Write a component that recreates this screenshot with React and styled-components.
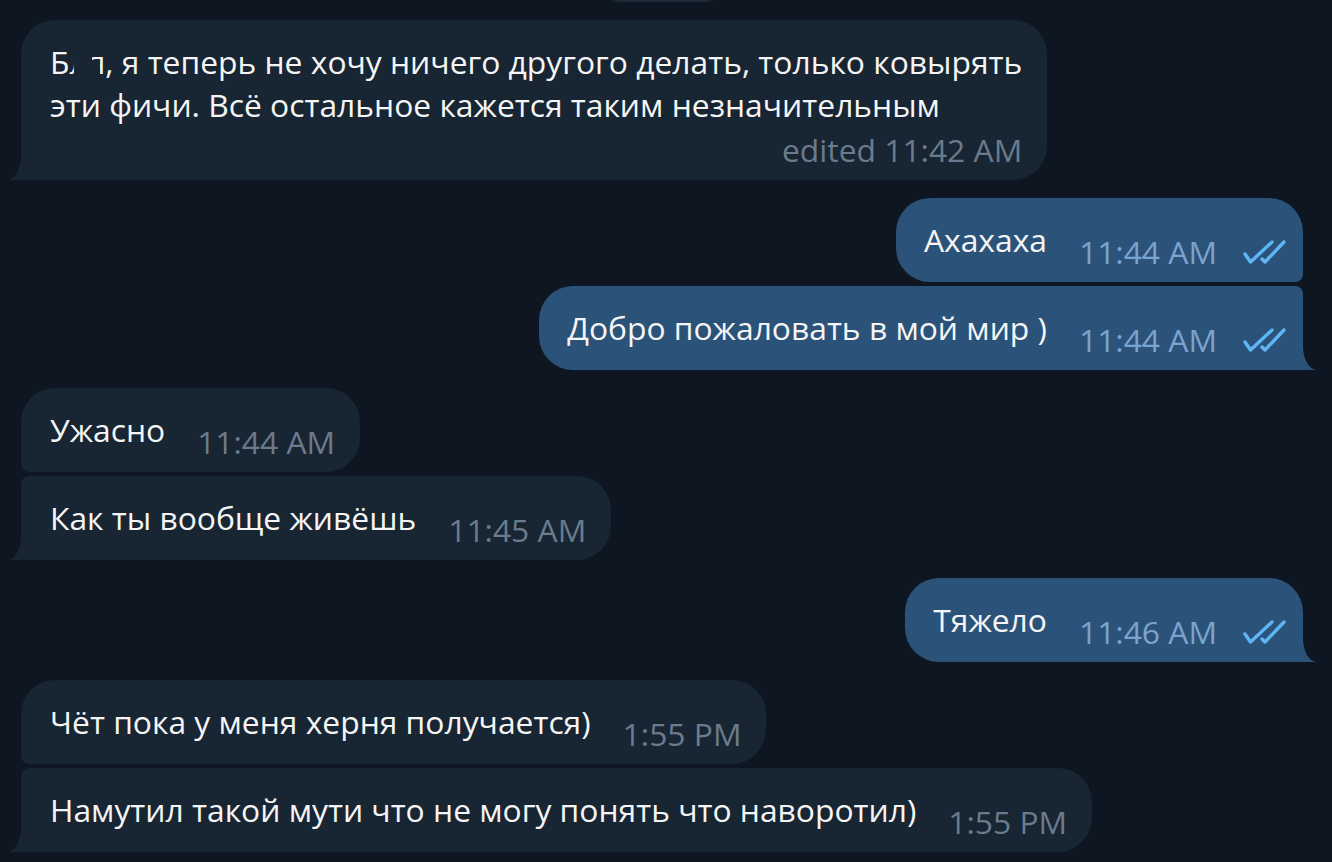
import React from "react";
import styled, { createGlobalStyle } from "styled-components";

const Global = createGlobalStyle`
  html, body {
    margin: 0;
    padding: 0;
    background: #0e1621;
  }
  body {
    font-family: "Open Sans", "Noto Sans", sans-serif;
    -webkit-font-smoothing: antialiased;
    overflow: hidden;
  }
`;

const Chat = styled.main`
  box-sizing: border-box;
  width: 1332px;
  height: 862px;
  overflow: hidden;
  padding: 0 29px 0 21px;
  display: flex;
  flex-direction: column;
  background: #0e1621;
`;

// date badge scrolled almost out of view
const DateBadge = styled.div`
  align-self: center;
  width: 117px;
  height: 32px;
  margin-top: -30px;
  border-radius: 16px;
  background: #1d2a38;
`;

const Group = styled.section`
  display: flex;
  flex-direction: column;
  align-items: ${(p) => (p.$out ? "flex-end" : "flex-start")};
  gap: 4px;
  margin-top: 18px;
`;

const BIG = 34;
const SMALL = 8;

const radius = ({ $out, $first, $last }) => {
  const head = $first ? BIG : SMALL;
  const foot = $last ? 0 : SMALL;
  return $out
    ? `${BIG}px ${head}px ${foot}px ${BIG}px`
    : `${head}px ${BIG}px ${BIG}px ${foot}px`;
};

const Bubble = styled.div`
  position: relative;
  box-sizing: border-box;
  display: flex;
  flex-direction: ${(p) => (p.$stacked ? "column" : "row")};
  align-items: flex-end;
  gap: ${(p) => (p.$stacked ? "2px" : "32px")};
  padding: 20px ${(p) => (p.$out ? "17px" : "25px")} 9px
    ${(p) => (p.$out ? "28px" : "29px")};
  border-radius: ${radius};
  background: ${(p) => (p.$out ? "#2b5278" : "#182533")};
  color: #f5f5f5;
`;

const Text = styled.div`
  align-self: ${(p) => (p.$stacked ? "stretch" : "auto")};
  padding-bottom: ${(p) => (p.$stacked ? "0" : "12px")};
  font-size: 31.8px;
  line-height: 43px;
  white-space: nowrap;
`;

const Meta = styled.span`
  display: flex;
  align-items: center;
  gap: 25px;
  font-size: 31.8px;
  line-height: 43px;
  white-space: nowrap;
  color: ${(p) => (p.$out ? "#7aa4cf" : "#6a7b8c")};
`;

const TailSvg = styled.svg`
  position: absolute;
  bottom: 0;
  width: 14px;
  height: 24px;
  ${(p) =>
    p.$out
      ? "right: -14px; transform: scaleX(-1);"
      : "left: -14px;"}
`;

// letters masked over with the bubble colour
const Censored = styled.span`
  position: relative;
  &::after,
  &::before {
    content: "";
    position: absolute;
    background: #182533;
  }
  &::after {
    left: 5px;
    width: 18px;
    top: 0;
    bottom: 0;
  }
  &::before {
    left: 22px;
    width: 9px;
    top: 20px;
    bottom: 0;
  }
`;

const Tail = ({ out }) => (
  <TailSvg $out={out} viewBox="0 0 14 24" aria-hidden="true">
    <path
      d="M14 0 L14 24 L0 24 A14 24 0 0 0 14 0 Z"
      fill={out ? "#2b5278" : "#182533"}
    />
  </TailSvg>
);

const ReadChecks = () => (
  <svg width="44" height="24" viewBox="0 0 44 24" aria-hidden="true">
    <g
      fill="none"
      stroke="#5fb6f6"
      strokeWidth="3.4"
      strokeLinecap="round"
      strokeLinejoin="round"
    >
      <path d="M3 14 L8.5 22 L30 2" />
      <path d="M20 19 L23 22 L42 2" />
    </g>
  </svg>
);

const Message = ({ out, first, last, stacked, time, children }) => (
  <Bubble $out={out} $first={first} $last={last} $stacked={stacked}>
    <Text $stacked={stacked}>{children}</Text>
    <Meta $out={out}>
      {time}
      {out && <ReadChecks />}
    </Meta>
    {last && <Tail out={out} />}
  </Bubble>
);

const groups = [
  {
    out: false,
    items: [
      {
        stacked: true,
        time: "edited 11:42 AM",
        body: (
          <>
            Б<Censored>ля</Censored>, я теперь не хочу ничего другого делать,
            только ковырять
            <br />
            эти фичи. Всё остальное кажется таким незначительным
          </>
        ),
      },
    ],
  },
  {
    out: true,
    items: [
      { time: "11:44 AM", body: "Ахахаха" },
      { time: "11:44 AM", body: "Добро пожаловать в мой мир )" },
    ],
  },
  {
    out: false,
    items: [
      { time: "11:44 AM", body: "Ужасно" },
      { time: "11:45 AM", body: "Как ты вообще живёшь" },
    ],
  },
  {
    out: true,
    items: [{ time: "11:46 AM", body: "Тяжело" }],
  },
  {
    out: false,
    items: [
      { time: "1:55 PM", body: "Чёт пока у меня херня получается)" },
      {
        time: "1:55 PM",
        body: "Намутил такой мути что не могу понять что наворотил)",
      },
    ],
  },
];

export default function App() {
  return (
    <>
      <Global />
      <Chat>
        <DateBadge />
        {groups.map((g, gi) => (
          <Group key={gi} $out={g.out}>
            {g.items.map((m, i) => (
              <Message
                key={i}
                out={g.out}
                first={i === 0}
                last={i === g.items.length - 1}
                stacked={m.stacked}
                time={m.time}
              >
                {m.body}
              </Message>
            ))}
          </Group>
        ))}
      </Chat>
    </>
  );
}
